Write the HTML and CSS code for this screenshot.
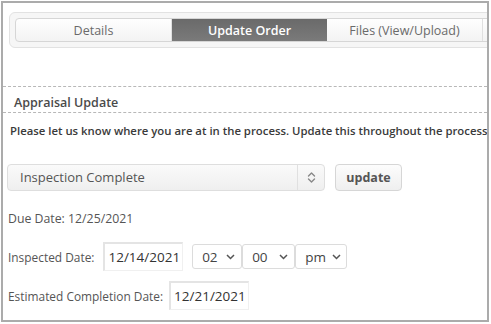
FILE: index.html
```html
<!DOCTYPE html>
<html>
<head>
<meta charset="utf-8">
<link rel="stylesheet" href="styles.css">
</head>
<body>
<div class="frame">
  <div class="tabbar">
    <div class="tabs">
      <div class="tab">Details</div>
      <div class="tab active">Update Order</div>
      <div class="tab">Files (View/Upload)</div>
      <div class="tab"></div>
    </div>
  </div>

  <div class="section-head">Appraisal Update</div>
  <p class="intro">Please let us know where you are at in the process. Update this throughout the process.</p>

  <div class="status-row">
    <div class="status-select">
      <span class="status-text">Inspection Complete</span>
      <span class="status-arrows">
        <svg width="9" height="13" viewBox="0 0 9 13"><path d="M1.5 5 L4.5 2 L7.5 5 M1.5 8 L4.5 11 L7.5 8" fill="none" stroke="#888" stroke-width="1.4" stroke-linecap="round" stroke-linejoin="round"/></svg>
      </span>
    </div>
    <button class="btn">update</button>
  </div>

  <div class="due">Due Date: 12/25/2021</div>

  <div class="field-row row-inspected">
    <span class="label">Inspected Date:</span>
    <span class="date-input">12/14/2021</span>
    <div class="time-group">
      <span class="mini-select">02 <svg class="chev" width="9" height="6" viewBox="0 0 9 6"><path d="M1 1 L4.5 4.5 L8 1" fill="none" stroke="#555" stroke-width="1.5"/></svg></span>
      <span class="mini-select">00 <svg class="chev" width="9" height="6" viewBox="0 0 9 6"><path d="M1 1 L4.5 4.5 L8 1" fill="none" stroke="#555" stroke-width="1.5"/></svg></span>
      <span class="mini-select">pm <svg class="chev" width="9" height="6" viewBox="0 0 9 6"><path d="M1 1 L4.5 4.5 L8 1" fill="none" stroke="#555" stroke-width="1.5"/></svg></span>
    </div>
  </div>

  <div class="field-row row-estimated">
    <span class="label">Estimated Completion Date:</span>
    <span class="date-input">12/21/2021</span>
  </div>
</div>
</body>
</html>
```
FILE: styles.css
```css
html, body {
  margin: 0;
  padding: 0;
  background: #fff;
}
body {
  padding: 1px;
  font-family: "Open Sans", "DejaVu Sans", sans-serif;
  color: #444;
}
.frame {
  box-sizing: border-box;
  width: 488px;
  height: 321px;
  border: 2px solid #ababab;
  overflow: hidden;
  background: #fff;
}
.tabbar {
  margin: 9px -20px 0 6px;
  height: 36px;
  box-sizing: border-box;
  border: 1px solid #e2e2e2;
  border-radius: 6px;
  background: #f6f6f6;
  padding: 5px 0 5px 5px;
}
.tabs {
  display: flex;
  height: 24px;
  box-sizing: border-box;
  border: 1px solid #d6d6d6;
  border-radius: 4px;
  background: linear-gradient(#fefefe, #f3f3f3);
  overflow: hidden;
}
.tab {
  flex: 0 0 156px;
  box-sizing: border-box;
  text-align: center;
  font-size: 12.5px;
  line-height: 23px;
  color: #6a6a6a;
  border-right: 1px solid #e0e0e0;
  white-space: nowrap;
}
.tab.active {
  flex-basis: 155px;
  background: linear-gradient(#6a6a6a, #7a7a7a);
  color: #fff;
  font-weight: 600;
  border-right: none;
}
.section-head {
  margin-top: 38px;
  border-top: 1px dashed #b8b8b8;
  border-bottom: 1px dashed #b8b8b8;
  padding: 5px 0 0 11px;
  height: 20px;
  line-height: 22px;
  font-size: 12.5px;
  font-weight: 600;
  color: #4a4a4a;
}
.intro {
  margin: 9px 0 0 7px;
  font-size: 11.35px;
  font-weight: 600;
  line-height: 18px;
  color: #3a3a3a;
  white-space: nowrap;
}
.status-row {
  display: flex;
  gap: 10px;
  margin: 24px 0 0 4px;
  height: 27px;
}
.status-select {
  box-sizing: border-box;
  width: 318px;
  height: 27px;
  display: flex;
  align-items: stretch;
  border: 1px solid #dedede;
  border-radius: 4px;
  background: linear-gradient(#fafafa, #efefef);
}
.status-text {
  flex: 1;
  padding-left: 12px;
  font-size: 13px;
  line-height: 25px;
  color: #555;
  border-right: 1px solid #e0e0e0;
}
.status-arrows {
  width: 26px;
  display: flex;
  align-items: center;
  justify-content: center;
}
.btn {
  box-sizing: border-box;
  width: 67px;
  height: 27px;
  border: 1px solid #d6d6d6;
  border-radius: 4px;
  background: linear-gradient(#fcfcfc, #efefef);
  font-family: inherit;
  font-size: 12.5px;
  font-weight: 700;
  color: #555;
  padding: 0;
}
.due {
  margin: 19px 0 0 5px;
  font-size: 12.3px;
  line-height: 18px;
  color: #555;
}
.field-row {
  display: flex;
  align-items: center;
  margin-left: 5px;
}
.row-inspected {
  margin-top: 14px;
  height: 29px;
}
.row-estimated {
  margin-top: 10px;
  height: 29px;
}
.label {
  font-size: 11.9px;
  color: #555;
}
.row-inspected .label { margin-right: 9px; }
.row-estimated .label { margin-right: 6px; }
.date-input {
  box-sizing: border-box;
  height: 29px;
  padding: 0 2px 0 3px;
  border-top: 2px solid #e4e4e4;
  border-left: 2px solid #e4e4e4;
  border-right: 1px solid #f0f0f0;
  border-bottom: 1px solid #f0f0f0;
  font-size: 13.5px;
  letter-spacing: 0;
  line-height: 26px;
  color: #333;
}
.time-group {
  display: flex;
  margin-left: 9px;
}
.mini-select {
  box-sizing: border-box;
  height: 25px;
  display: flex;
  align-items: center;
  justify-content: space-between;
  padding: 0 6px 0 9px;
  border: 1px solid #dcdcdc;
  border-radius: 3px;
  background: #fff;
  font-size: 13.5px;
  color: #444;
  gap: 6px;
}
.chev { flex-shrink: 0; }
.mini-select:nth-child(1) { width: 50px; }
.mini-select:nth-child(2) { width: 53px; }
.mini-select:nth-child(3) { width: 52px; }
```
